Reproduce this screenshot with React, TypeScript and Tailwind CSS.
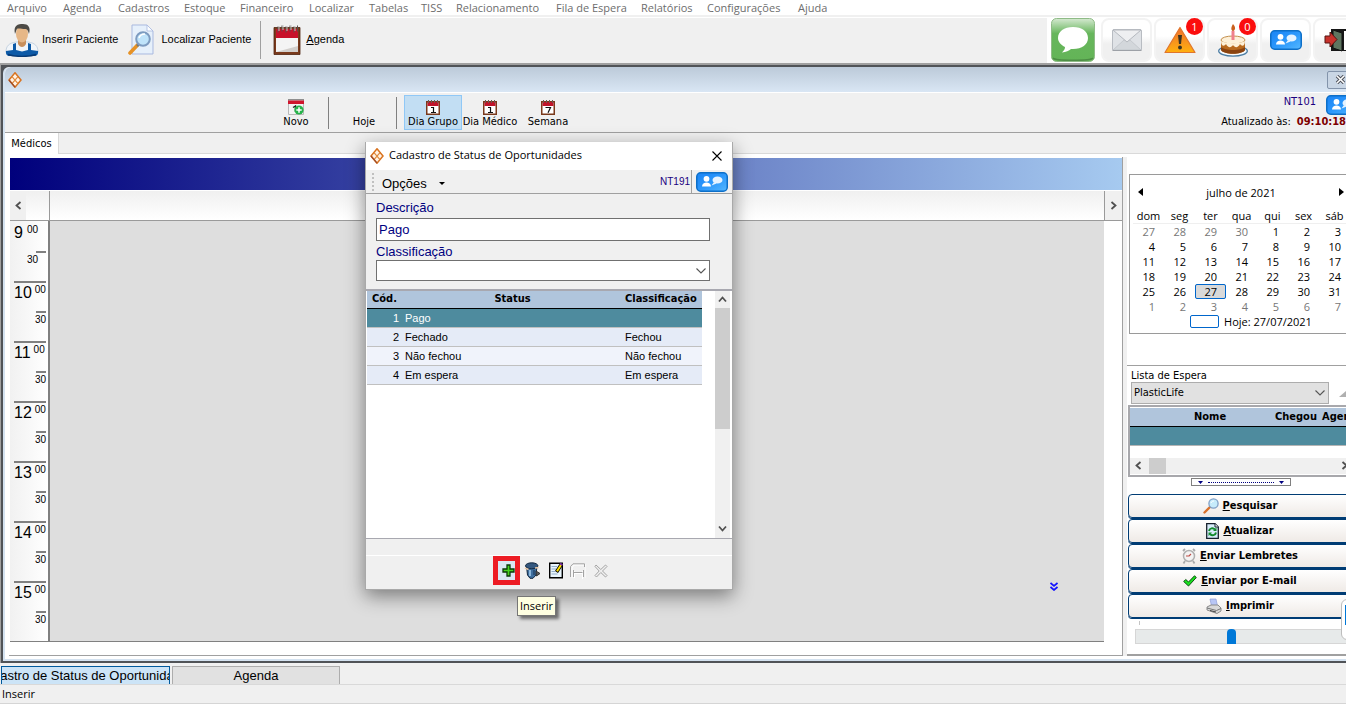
import { ReactNode } from 'react';

const ui = "font-['Open_Sans',sans-serif]";
const tahoma = "font-['DejaVu_Sans_Condensed','DejaVu_Sans',sans-serif]";

const MENU = ['Arquivo', 'Agenda', 'Cadastros', 'Estoque', 'Financeiro', 'Localizar', 'Tabelas', 'TISS', 'Relacionamento', 'Fila de Espera', 'Relatórios', 'Configurações', 'Ajuda'];

const HOURS = [9, 10, 11, 12, 13, 14, 15];

const WEEKDAYS = ['dom', 'seg', 'ter', 'qua', 'qui', 'sex', 'sáb'];

const WEEKS = [
  [27, 28, 29, 30, 1, 2, 3],
  [4, 5, 6, 7, 8, 9, 10],
  [11, 12, 13, 14, 15, 16, 17],
  [18, 19, 20, 21, 22, 23, 24],
  [25, 26, 27, 28, 29, 30, 31],
  [1, 2, 3, 4, 5, 6, 7],
];

const STATUSES = [
  { id: 1, name: 'Pago', kind: '', row: 'bg-[#4e8b9e] text-white' },
  { id: 2, name: 'Fechado', kind: 'Fechou', row: 'bg-[#e5ebf7]' },
  { id: 3, name: 'Não fechou', kind: 'Não fechou', row: 'bg-[#f0f3fb]' },
  { id: 4, name: 'Em espera', kind: 'Em espera', row: 'bg-[#e5ebf7]' },
];

function DiamondIcon() {
  return (
    <svg width="14" height="16" viewBox="0 0 14 16" className="shrink-0">
      <path d="M7 .8 13 8 7 15.2 1 8Z" fill="#fff3e6" stroke="#d9731f" strokeWidth="1.5" />
      <path d="M4 4.6 10 11.6M10 4.6 4 11.6" stroke="#e08a3c" strokeWidth="1.2" />
      <path d="M7 15.2 1 8" stroke="#9c4a28" strokeWidth="1.2" />
    </svg>
  );
}

function PatientIcon() {
  return (
    <svg width="34" height="34" viewBox="0 0 34 34" className="shrink-0">
      <path d="M1 29c0-6 3-9 10-10h12c7 1 10 4 10 10l-4 2H5Z" fill="#f1f5f9" stroke="#b9c9da" strokeWidth=".8" />
      <path d="M1 28c-.5 3 1 5 4 5h24c3 0 4.500-2 4-5l-7-1v-6l-3-1v7l-6 1.500-6-1.500v-7l-3 1v6Z" fill="#0d5aa7" />
      <path d="M3 31.500c8 2.500 20 2.500 28 0" stroke="#083a75" strokeWidth="1.500" fill="none" />
      <path d="M13 17h8v4c-2 4-6 4-8 0Z" fill="#c98f5b" />
      <ellipse cx="17" cy="11" rx="6" ry="8.500" fill="#e6b787" />
      <path d="M10 11C8 2 13 1 18 1s8 3 6 10c-1-4-2-5-4-5-3 0-7-1-8 0s-1 3-2 5Z" fill="#4c4a45" />
    </svg>
  );
}

function SearchDocIcon() {
  return (
    <svg width="26" height="32" viewBox="0 0 26 32" className="shrink-0">
      <path d="M4 1h15l6 6v23H4Z" fill="#e6f0fb" stroke="#a9b9df" />
      <path d="M19 1v6h6Z" fill="#fafdff" stroke="#a9b9df" strokeWidth=".8" />
      <path d="m9.500 21-7.500 8" stroke="#e69226" strokeWidth="3.600" strokeLinecap="round" />
      <path d="m11 20-2 2" stroke="#777" strokeWidth="2.500" />
      <circle cx="15" cy="15" r="6.800" fill="#bfe3fa" stroke="#7d9bc0" strokeWidth="2" />
      <path d="M11 14c1-3 3-4 6-4" stroke="#fff" strokeWidth="1.500" fill="none" />
    </svg>
  );
}

function AgendaIcon() {
  return (
    <svg width="28" height="30" viewBox="0 0 28 30" className="shrink-0">
      <path d="M1 2.500h26v27H1Z" fill="#7a3a1c" stroke="#4f230f" strokeWidth=".8" />
      <path d="M3 4h22v9H3Z" fill="#c8102a" />
      <path d="M3 13h22v14H3Z" fill="#f4f4f4" />
      <path d="m3 27 22-6v6Z" fill="#d2cfcc" />
      <path d="M5 1.500v6M9 .5v6M13 1.500v6M17 .5v6M21 1.500v6M24.500.5v6" stroke="#59504c" />
      <path d="M6 1v5M10 0v5M14 1v5M18 0v5M22 1v5" stroke="#c4c4c4" />
    </svg>
  );
}

function SmallCalendar({ digit }: { digit: string }) {
  return (
    <svg width="14" height="15" viewBox="0 0 14 15" className="shrink-0">
      <path d="M.75 1.750h12.500v12.500H.75Z" fill="#fff" stroke="#7a3a1c" strokeWidth="1.500" />
      <path d="M1.500 2h11v4h-11Z" fill="#c0142a" />
      <path d="M2.500 0v3M5.500 0v3M8.500 0v3M11.500 0v3" stroke="#6b5a55" />
      {digit === '1' ? (
        <path d="M5 7.500h2.500V12.500M5 12.500h5" stroke="#111" strokeWidth="1.200" fill="none" />
      ) : (
        <path d="M4.500 7.500H9.500L7 12.800" stroke="#111" strokeWidth="1.200" fill="none" />
      )}
    </svg>
  );
}

function NewCalendar() {
  return (
    <svg width="16" height="16" viewBox="0 0 16 16" className="shrink-0">
      <path d="M.5 .5h15v15H.5Z" fill="#f4f4f4" stroke="#b8b8b8" />
      <path d="M0 0h16v1.500H0Z" fill="#8f8f8f" />
      <path d="M0 1.500h16V5H0Z" fill="#d0142c" />
      <path d="M5 8.500 7.500 7v6" stroke="#222" strokeWidth="1.400" fill="none" />
      <circle cx="11" cy="11" r="4.600" fill="#27b34b" />
      <path d="M11 8.300v5.400M8.300 11h5.400" stroke="#fff" strokeWidth="1.500" />
    </svg>
  );
}

function SupportIcon() {
  return (
    <svg width="32" height="20" viewBox="0 0 32 20" className="shrink-0">
      <defs>
        <linearGradient id="support" x1="0" y1="0" x2="1" y2="1">
          <stop offset="0" stopColor="#1a84f5" />
          <stop offset=".5" stopColor="#2b97fb" />
          <stop offset="1" stopColor="#55b8ff" />
        </linearGradient>
      </defs>
      <rect x=".75" y=".75" width="30.500" height="18.500" rx="4" fill="url(#support)" stroke="#0d6fc8" strokeWidth="1.500" />
      <circle cx="10.500" cy="6.800" r="2.900" fill="#fff" />
      <path d="M6 14.500c0-5.500 9-5.500 9 0Z" fill="#fff" />
      <ellipse cx="21.500" cy="8" rx="5" ry="3.600" fill="#e6f3ff" />
      <path d="m18 10-2.500 3.500 5-2Z" fill="#e6f3ff" />
    </svg>
  );
}

function GreenChat() {
  return (
    <svg width="44" height="44" viewBox="0 0 44 44" className="shrink-0">
      <defs>
        <linearGradient id="chat" x1="0" y1="0" x2="0" y2="1">
          <stop offset="0" stopColor="#d5e9d1" />
          <stop offset=".35" stopColor="#67b65c" />
          <stop offset="1" stopColor="#63b457" />
        </linearGradient>
      </defs>
      <rect x=".5" y=".5" width="43" height="43" rx="5" fill="url(#chat)" stroke="#8fbb87" />
      <path d="M2 40c2 3 38 3 40 0" stroke="#4d8d45" strokeWidth="1.500" fill="none" />
      <path d="M22 9c9 0 15 4.500 15 11s-6 11-15 11h-2c-2 2-5 3-9 3.500 2-2 3-3.500 3-5.500-4-2-7-5-7-9 0-6.500 6-11 15-11Z" fill="#fff" />
    </svg>
  );
}

function MailIcon() {
  return (
    <svg width="30" height="22" viewBox="0 0 30 22">
      <rect x=".5" y=".5" width="29" height="21" rx="1.500" fill="#dfe2e6" stroke="#b8bcc2" />
      <path d="m1 21 11-10h6l11 10Z" fill="#d3d7db" stroke="#bcc0c5" strokeWidth=".7" />
      <path d="m1 1 14 12L29 1Z" fill="#eeeff1" stroke="#b4b8be" />
      <path d="M.5 21.500h29" stroke="#9da1a7" />
    </svg>
  );
}

function WarningIcon() {
  return (
    <svg width="32" height="28" viewBox="0 0 32 28">
      <defs>
        <linearGradient id="warn" x1="0" y1="0" x2="0" y2="1">
          <stop offset="0" stopColor="#f0702e" />
          <stop offset="1" stopColor="#ffb00f" />
        </linearGradient>
      </defs>
      <path d="M16 1.500 31 26.500H1Z" fill="url(#warn)" stroke="#e0752b" strokeWidth="1.200" strokeLinejoin="round" />
      <path d="M14 9h4l-1 9h-2Z" fill="#3a3322" />
      <circle cx="16" cy="21.500" r="1.900" fill="#3a3322" />
    </svg>
  );
}

function CakeIcon() {
  return (
    <svg width="30" height="33" viewBox="0 0 30 33">
      <ellipse cx="15" cy="27" rx="14.300" ry="5.200" fill="#f6fafd" stroke="#4a7ca3" strokeWidth="1.300" />
      <path d="M3 17v9c3 5 21 5 24 0v-9Z" fill="#b8691e" />
      <path d="M3 23v3c3 5 21 5 24 0v-3c-4 4-20 4-24 0Z" fill="#8a4310" />
      <ellipse cx="15" cy="16" rx="12" ry="4" fill="#fdf0d8" stroke="#c48f4c" strokeWidth="1" />
      <path d="M3 17c0 5 3 6 5 3 2 4 5 4 7 1 2 3 5 3 7-1 2 3 5 2 5-3-5 3-18 3-24 0Z" fill="#fdf0d8" />
      <path d="M13.500 7h3v9h-3Z" fill="#f0818c" />
      <path d="M15 0c3 3 2.500 6.500 0 7-2.500-.5-2-4 0-7Z" fill="#c9601e" />
    </svg>
  );
}

function ExitIcon() {
  return (
    <svg width="30" height="24" viewBox="0 0 30 24">
      <path d="M7 1h22v22H7Z" fill="#171717" />
      <path d="m9 2 9 3v18l-9-3Z" fill="#5f7560" stroke="#111" />
      <path d="M20 3h7v19h-7Z" fill="#fff" />
      <path d="M1 8h5V4l7 7.500L6 19v-4H1Z" fill="#c8322c" stroke="#571511" />
    </svg>
  );
}

function ToolCell({ children, badge, label }: { children: ReactNode; badge?: string; label: string }) {
  return (
    <button aria-label={label} className="relative flex h-11 w-[51px] shrink-0 items-center justify-center rounded-lg border-2 border-[#f3f3f3] bg-linear-to-b from-white from-40% to-[#f0f0f0] to-60%">
      {children}
      {badge && (
        <span className={`${ui} absolute -top-0.5 right-0 flex size-[17px] items-center justify-center rounded-full bg-[#fb0d0d] text-[11px] leading-none text-white`}>
          {badge}
        </span>
      )}
    </button>
  );
}

function Chevron({ dir }: { dir: 'left' | 'right' | 'up' | 'down' }) {
  const paths = { left: 'M6.500 1 2.500 4.500 6.500 8', right: 'M2.500 1 6.500 4.500 2.500 8', up: 'M1 6.500 4.500 2.500 8 6.500', down: 'M1 2.500 4.500 6.500 8 2.500' };
  return (
    <svg width="9" height="9" viewBox="0 0 9 9" className="shrink-0">
      <path d={paths[dir]} fill="none" stroke="#505050" strokeWidth="1.800" />
    </svg>
  );
}

function SelectArrow() {
  return (
    <svg width="10" height="6" viewBox="0 0 10 6" className="pointer-events-none col-start-1 row-start-1 mr-1 self-center justify-self-end">
      <path d="m.5.5 4.500 4.500L9.500.5" fill="none" stroke="#555" strokeWidth="1.100" />
    </svg>
  );
}

function AgendaTool({ icon, label, active, width }: { icon?: ReactNode; label: string; active?: boolean; width: string }) {
  return (
    <button className={`${width} ${active ? 'border-[#90c8f6] bg-[#c2def3]' : 'border-transparent'} flex h-[35px] shrink-0 flex-col items-center justify-end border text-[11px] leading-[14px] whitespace-nowrap`}>
      {icon}
      <span>{label}</span>
    </button>
  );
}

function TimeColumn() {
  return (
    <div className="w-10 shrink-0 border-r-2 border-[#808080] bg-linear-to-r from-[#f1f1f1] to-white pr-0.5 pl-1">
      {HOURS.map((hour, i) => (
        <div key={hour}>
          <div className={`${i ? 'border-[#808080]' : 'border-transparent'} flex h-[30px] items-start gap-[3px] border-t-2`}>
            <span className="text-[16px] leading-[19px]">{hour}</span>
            <span className={`${i ? '' : 'pl-px'} text-[10px] leading-[13px]`}>00</span>
          </div>
          <div className="flex h-[30px] flex-col items-end">
            <span className="h-0.5 w-2.5 bg-[#808080]" />
            <span className={`${i ? '' : 'pr-2'} text-[10px] leading-[13px]`}>30</span>
          </div>
        </div>
      ))}
    </div>
  );
}

function MiniCalendar() {
  return (
    <section className={`${ui} mx-0.5 mt-[17px] h-[160px] w-[224px] border border-[#9a9a9a] px-[3px] text-[11px] leading-[15px]`}>
      <div className="flex h-[34px] items-center justify-between px-[5px]">
        <button aria-label="Mês anterior">
          <svg width="5" height="8" viewBox="0 0 5 8"><path d="M5 0v8L0 4Z" /></svg>
        </button>
        <span>julho de 2021</span>
        <button aria-label="Próximo mês">
          <svg width="5" height="8" viewBox="0 0 5 8"><path d="M0 0v8l5-4Z" /></svg>
        </button>
      </div>
      <table className="w-[217px] table-fixed border-collapse">
        <thead>
          <tr className="h-[14px] border-b border-[#efefef]">
            {WEEKDAYS.map((d) => (
              <th key={d} className="p-0 text-center font-normal leading-[13px]">{d}</th>
            ))}
          </tr>
        </thead>
        <tbody>
          {WEEKS.map((week, w) => (
            <tr key={w} className="h-[15px]">
              {week.map((day, d) => {
                const outside = (w === 0 && day > 20) || w === 5;
                const today = w === 4 && day === 27;
                return (
                  <td key={d} className={`p-0 pr-[9px] text-right ${outside ? 'text-[#767676]' : ''} ${today ? 'rounded-xs bg-[#d9d9d9] outline -outline-offset-1 outline-[#0066cc]' : ''}`}>
                    {day}
                  </td>
                );
              })}
            </tr>
          ))}
        </tbody>
      </table>
      <div className="flex h-4 items-center justify-center gap-[5px] pl-5">
        <span className="h-[13px] w-[29px] rounded-xs border border-[#0066cc]" />
        <span>Hoje: 27/07/2021</span>
      </div>
    </section>
  );
}

const ACTIONS: { key: string; rest: string; icon: ReactNode }[] = [
  {
    key: 'P', rest: 'esquisar',
    icon: (
      <svg width="16" height="16" viewBox="0 0 16 16">
        <path d="m7 9-5.500 5.500" stroke="#d9702a" strokeWidth="2.400" strokeLinecap="round" />
        <circle cx="10.500" cy="5.500" r="4.600" fill="#c6ebfb" stroke="#7f9fc6" strokeWidth="1.300" />
        <path d="M8 5c.5-1.500 1.500-2 3-2" stroke="#fff" fill="none" />
      </svg>
    ),
  },
  {
    key: 'A', rest: 'tualizar',
    icon: (
      <svg width="13" height="16" viewBox="0 0 13 16">
        <path d="M.7.7H9l3.300 3.300v11.300H.7Z" fill="#d8ecfa" stroke="#17202c" strokeWidth="1.300" />
        <path d="M9 .7V4h3.300" fill="#fff" stroke="#17202c" />
        <path d="M3 8c.5-3 4-3.500 6-1.500M10 9.500c-.5 3-4 3.500-6 1.500" stroke="#138a2d" strokeWidth="2" fill="none" />
        <path d="M10.500 4.500V8H7ZM2.500 13V9.500H6Z" fill="#138a2d" />
      </svg>
    ),
  },
  {
    key: 'E', rest: 'nviar Lembretes',
    icon: (
      <svg width="14" height="16" viewBox="0 0 14 16">
        <path d="m1 3 2-2M13 3l-2-2M3 13l-1.500 2.500M11 13l1.500 2.500" stroke="#aaa" strokeWidth="1.800" />
        <circle cx="7" cy="8" r="5.500" fill="#f3f3f3" stroke="#b0b0b0" strokeWidth="1.500" />
        <path d="M7 8H4M7 8l2-2" stroke="#c05048" strokeWidth="1.100" />
      </svg>
    ),
  },
  {
    key: 'E', rest: 'nviar por E-mail',
    icon: (
      <svg width="14" height="12" viewBox="0 0 14 12">
        <path d="m.7 6.500 2-2L5.500 7 11.500.8l1.800 1.700-7.800 8.500Z" fill="#19e01e" stroke="#0a4d10" strokeWidth="1" />
      </svg>
    ),
  },
  {
    key: 'I', rest: 'mprimir',
    icon: (
      <svg width="16" height="16" viewBox="0 0 16 16">
        <path d="M4 1h6l1.500 7H5.500Z" fill="#b8c6f5" stroke="#8f9fd8" strokeWidth=".7" />
        <path d="m1 9 4-2h7l3 3v3l-4 2.500L1 12Z" fill="#d9d9d9" stroke="#8b8b8b" />
        <path d="m1 10 9.500 2.500L15 10.500" fill="none" stroke="#777" />
        <path d="m4 12.500 6 1.500" stroke="#444" />
      </svg>
    ),
  },
];

function WaitingList() {
  return (
    <section className="mt-[31px] border-t border-[#a0a0a0] text-[11px]">
      <div className="flex flex-col pt-[3px] pl-1">
        <label htmlFor="lista" className="leading-[13px]">Lista de Espera</label>
        <div className="flex items-center gap-2.5">
          <div className="grid w-[198px]">
            <select id="lista" className="col-start-1 row-start-1 h-[22px] appearance-none border border-[#adadad] bg-[#e1e1e1] px-0.5 text-[11px]">
              <option>PlasticLife</option>
            </select>
            <SelectArrow />
          </div>
          <svg width="16" height="7" viewBox="0 0 16 7"><path d="M8 0l8 7H0Z" fill="#b0b0b0" /></svg>
        </div>
      </div>
      <div className="mt-px ml-px h-[72px] overflow-hidden border-2 border-r-0 border-[#a8a8ac] pt-px">
        <table className="w-[253px] table-fixed border-collapse">
          <colgroup>
            <col className="w-[145px]" />
            <col className="w-[47px]" />
            <col />
          </colgroup>
          <thead>
            <tr className="h-[18px] border-b border-black bg-[#b0c5dc] text-left leading-[17px]">
              <th className="py-0 pr-0 pl-16">Nome</th>
              <th className="p-0">Chegou</th>
              <th className="p-0">Agenda</th>
            </tr>
          </thead>
          <tbody>
            <tr className="h-[19px] border-b border-[#b5b5b5] bg-[#4e8b9e]"><td /><td /><td /></tr>
          </tbody>
        </table>
        <div className="mt-3 flex h-4 w-[219px] items-center gap-1.5 bg-[#f0f0f0] pl-1">
          <Chevron dir="left" />
          <span className="h-4 w-[17px] bg-[#cdcdcd]" />
          <span className="ml-auto"><Chevron dir="right" /></span>
        </div>
      </div>
    </section>
  );
}

function SidePanel() {
  return (
    <aside className="flex w-[231px] shrink-0 flex-col border-b-2 border-[#a0a0a0] pb-2.5">
      <MiniCalendar />
      <WaitingList />
      <div className="mt-px ml-16 flex h-2 w-[100px] items-center gap-[5px] border border-[#808080] bg-white px-1.5">
        <svg width="5" height="3" viewBox="0 0 5 3"><path d="M0 0h5L2.500 3Z" fill="#000080" /></svg>
        <span className="grow border-t border-dotted border-[#000080]" />
        <svg width="5" height="3" viewBox="0 0 5 3"><path d="M0 0h5L2.500 3Z" fill="#000080" /></svg>
      </div>
      <div className="mt-2 ml-px flex flex-col gap-px">
        {ACTIONS.map((a) => (
          <button key={a.rest} className="flex h-6 items-center justify-center gap-1 rounded-sm border border-[#003c74] bg-linear-to-b from-white to-[#efeae6] pr-1.5 text-[11px] leading-4 font-bold shadow-[0_1px_0_#003c74]">
            {a.icon}
            <span><span className="underline">{a.key}</span>{a.rest}</span>
          </button>
        ))}
      </div>
      <div className="mt-[3px] ml-3 h-1 w-px bg-[#c4c4c4]" />
      <label className="mt-1 ml-2 flex h-[15px]">
        <span className="sr-only">Intervalo</span>
        <input
          type="range"
          min="0"
          max="100"
          defaultValue="43"
          className="h-[15px] w-full appearance-none border border-[#d6d6d6] bg-[#e7eaea] [&::-webkit-slider-thumb]:h-[15px] [&::-webkit-slider-thumb]:w-[9px] [&::-webkit-slider-thumb]:appearance-none [&::-webkit-slider-thumb]:rounded-t-sm [&::-webkit-slider-thumb]:bg-[#0078d7]"
        />
      </label>
    </aside>
  );
}

function AgendaWindow() {
  return (
    <main className={`${tahoma} -mr-3 ml-0.5 flex grow flex-col rounded-tl-md border-b-2 border-l-2 border-[#d4e2f0] bg-white text-[11px]`}>
      <header className="flex h-[25px] items-center justify-between rounded-tl-md bg-linear-to-b from-[#bccad9] to-[#d9e6f4] pr-1 pl-[3px]">
        <DiamondIcon />
        <button aria-label="Fechar agenda" className="flex h-[18px] w-[27px] items-center justify-center rounded-xs border border-[#8394ab] bg-[#c9d6e5]">
          <svg width="11" height="9" viewBox="0 0 11 9">
            <path d="m2 1 7 7M9 1 2 8" stroke="#4b4f58" strokeWidth="3.400" />
            <path d="m2 1 7 7M9 1 2 8" stroke="#fff" strokeWidth="1.500" />
          </svg>
        </button>
      </header>
      <div className="flex h-[41px] shrink-0 items-center border-t border-b border-t-white border-b-[#a0a0a0] bg-[#f0f0f0] pl-[270px]">
        <AgendaTool width="w-[42px]" icon={<NewCalendar />} label="Novo" />
        <span className="mr-3 ml-[11px] h-8 w-px bg-[#808080]" />
        <AgendaTool width="w-[46px]" label="Hoje" />
        <span className="mr-[7px] ml-[9px] h-8 w-px bg-[#808080]" />
        <AgendaTool width="w-[58px]" icon={<SmallCalendar digit="1" />} label="Dia Grupo" active />
        <AgendaTool width="w-[56px]" icon={<SmallCalendar digit="1" />} label="Dia Médico" />
        <AgendaTool width="w-[60px]" icon={<SmallCalendar digit="7" />} label="Semana" />
        <div className="mr-3 ml-auto flex flex-col items-end whitespace-nowrap">
          <div className="-mr-3 flex h-5 items-center gap-2.5">
            <a href="#nt101" className="pb-1 text-[#1a007f]">NT101</a>
            <SupportIcon />
          </div>
          <p className="flex gap-1.5 pb-0.5 leading-[14px]">
            Atualizado às: <strong className="text-[#7d0000]">09:10:18</strong>
          </p>
        </div>
      </div>
      <div className="flex h-[21px] shrink-0 bg-[#f0f0f0]">
        <button className="w-[54px] border-r border-[#d9d9d9] bg-white pt-0.5">Médicos</button>
        <span className="grow border-b border-[#d9d9d9]" />
      </div>
      <div className="flex grow pt-[3px] pb-[3px] pl-1">
        <div className="flex grow flex-col border-r border-b border-[#a0a0a0] pt-px pl-px">
          <div className="h-8 bg-linear-to-r/srgb from-[#00007c] to-[#a6caf0]" />
          <div className="mt-px flex h-[30px] border-b border-[#9a9a9a] bg-linear-to-b from-[#f0f0f0] to-white">
            <button aria-label="Dia anterior" className="flex w-4 items-center justify-center bg-[#f0f0f0]"><Chevron dir="left" /></button>
            <span className="w-6 border-r border-[#9a9a9a]" />
            <span className="grow border-r border-[#9a9a9a]" />
            <button aria-label="Próximo dia" className="flex w-[17px] items-center justify-center bg-[#f0f0f0]"><Chevron dir="right" /></button>
          </div>
          <div className="mr-[18px] flex border-b border-[#808080] font-['Liberation_Sans',sans-serif]">
            <TimeColumn />
            <div className="flex grow items-end justify-end bg-[#dedede] pr-[46px] pb-[50px]">
              <svg width="8" height="9" viewBox="0 0 8 9">
                <path d="m.5 1 3.500 3 3.500-3M.5 5 4 8l3.500-3" fill="none" stroke="#1414ff" strokeWidth="1.700" />
              </svg>
            </div>
          </div>
        </div>
        <div className="w-1 bg-[#f0f0f0]" />
        <SidePanel />
      </div>
    </main>
  );
}

function StatusDialog() {
  return (
    <div role="dialog" aria-label="Cadastro de Status de Oportunidades" className="absolute top-[142px] left-[365px] flex w-[368px] flex-col border border-t-0 border-[#a9a9a9] bg-[#f0f0f0] font-['Liberation_Sans',sans-serif] shadow-[0_6px_18px_rgba(0,0,0,0.45)]">
      <header className={`${ui} flex h-7 items-center gap-[5px] bg-white pr-2.5 pl-1 text-[11px]`}>
        <DiamondIcon />
        <h1 className="pb-0.5">Cadastro de Status de Oportunidades</h1>
        <button aria-label="Fechar" className="ml-auto">
          <svg width="10" height="10" viewBox="0 0 10 10"><path d="m.5.5 9 9m0-9-9 9" stroke="#000" strokeWidth="1.100" /></svg>
        </button>
      </header>
      <div className="flex h-6 items-center border-b border-[#a0a0a0] pl-1.5">
        <span className="h-[18px] border-l-2 border-dotted border-[#c0c0c0]" />
        <button className="ml-2 flex items-center gap-3 pt-1 text-[13px]">
          Opções
          <svg width="6" height="3" viewBox="0 0 6 3"><path d="M0 0h6L3 3Z" /></svg>
        </button>
        <a href="#nt191" className="ml-auto pr-px text-[10px] text-[#1a007f]">NT191</a>
        <button aria-label="Suporte" className="flex h-full items-center border-l border-[#a0a0a0] px-1"><SupportIcon /></button>
      </div>
      <form className="flex h-[95px] flex-col pt-1.5 pr-[22px] pl-2.5 text-[13px] text-[#00007f]">
        <label htmlFor="descricao" className="leading-4">Descrição</label>
        <input id="descricao" defaultValue="Pago" className="mt-0.5 h-[23px] border border-[#707070] bg-white px-0.5" />
        <label htmlFor="classificacao" className="mt-[3px] leading-4">Classificação</label>
        <div className="grid">
          <select id="classificacao" className="col-start-1 row-start-1 h-[21px] appearance-none border border-[#707070] bg-white px-0.5">
            <option></option>
          </select>
          <SelectArrow />
        </div>
      </form>
      <div className="flex h-[250px] items-start border-t-2 border-b border-[#a8a8b0] bg-white pl-px">
        <table className="w-[335px] table-fixed border-collapse text-[11px] leading-[14px]">
          <colgroup>
            <col className="w-9" />
            <col />
            <col className="w-20" />
          </colgroup>
          <thead>
            <tr className={`${tahoma} h-[17px] border-b border-black bg-[#b0c5dc]`}>
              <th className="p-0 pl-[5px] text-left">Cód.</th>
              <th className="p-0">Status</th>
              <th className="p-0 pl-[3px] text-left">Classificação</th>
            </tr>
          </thead>
          <tbody>
            {STATUSES.map((s) => (
              <tr key={s.id} className={`${s.row} h-[19px] border-b border-[#c0c0c0]`}>
                <td className="p-0 pr-1 text-right">{s.id}</td>
                <td className="p-0 pl-0.5">{s.name}</td>
                <td className="p-0 pl-[3px]">{s.kind}</td>
              </tr>
            ))}
          </tbody>
        </table>
        <div className="mr-0.5 ml-auto flex h-full w-[15px] flex-col items-center bg-[#f0f0f0] pb-1">
          <span className="flex h-[17px] items-center"><Chevron dir="up" /></span>
          <span className="h-[121px] w-full bg-[#cdcdcd]" />
          <span className="mt-auto flex h-3 items-center"><Chevron dir="down" /></span>
        </div>
      </div>
      <div className="mt-4 flex h-[34px] items-center border-t border-white pb-1 pl-[127px]">
        <button aria-label="Inserir" className="flex h-[29px] w-[27px] items-center justify-end border-[5px] border-[#ed1c24] bg-[#d9e7f4]">
          <svg width="13" height="13" viewBox="0 0 13 13">
            <path d="M5 1h3v4h4v3H8v4H5V8H1V5h4Z" fill="#45d321" stroke="#0a3a0a" strokeWidth="1.300" />
          </svg>
        </button>
        <button aria-label="Excluir" className="ml-1">
          <svg width="17" height="17" viewBox="0 0 17 17">
            <path d="M2.500 4h10.500l-1 9-3 3.300H6L3.500 13Z" fill="#3f6f9f" stroke="#10263f" />
            <ellipse cx="7.700" cy="3.800" rx="6.200" ry="3" fill="#34577e" stroke="#10263f" />
            <path d="M6 8v6" stroke="#8db7db" strokeWidth="2" />
            <path d="M10 8v5" stroke="#25466c" strokeWidth="1.500" />
            <path d="m1 6 3.500 1.500M11 6l3.500-.5" stroke="#e7c7a8" strokeWidth="1.600" />
            <path d="m12 9 4 2.500-3.500 2.500Z" fill="#5d5d5d" stroke="#333" />
          </svg>
        </button>
        <button aria-label="Editar" className="ml-2">
          <svg width="14" height="17" viewBox="0 0 14 17">
            <path d="M.7 1.200h12.600v14.600H.7Z" fill="#eaf6fd" stroke="#000" strokeWidth="1.400" />
            <path d="M2.500 4.500H8M2.500 7H7M2.500 9.500H6M2.500 12h6" stroke="#91aeca" />
            <path d="m12 3-4.500 7" stroke="#000" strokeWidth="3.600" />
            <path d="m12 3-4 6.300" stroke="#ffe100" strokeWidth="2" />
            <path d="m11 1.500 2.500 1.500" stroke="#772aa2" strokeWidth="1.800" />
          </svg>
        </button>
        <button aria-label="Salvar" disabled className="ml-[7px]">
          <svg width="16" height="16" viewBox="0 0 16 16">
            <path d="M1 14V4l2-3h12v13M3.500 14V7M3.500 9.500h8M11.500 7v8" fill="none" stroke="#fff" transform="translate(1 1)" />
            <path d="M.5 14V3.500L3 .8h11.500V4M3.500 14V7M3.500 9.500h9M13.500 7v7" fill="none" stroke="#a3a3a3" />
          </svg>
        </button>
        <button aria-label="Cancelar" disabled className="ml-2">
          <svg width="14" height="14" viewBox="0 0 14 14">
            <path d="m2 1 4.800 4.500L11.500 1l1.500 1.500L8.500 7l4.500 4.500-1.500 1.500L6.800 8.500 2.500 13 1 11.500 5.200 7 1 2.500Z" fill="#f0f0f0" stroke="#a3a3a3" />
          </svg>
        </button>
      </div>
    </div>
  );
}

export default function App() {
  return (
    <div className="relative flex min-h-screen flex-col overflow-hidden bg-[#f0f0f0] font-['Liberation_Sans',sans-serif] text-black">
      <nav className={`${ui} grid h-[15px] grid-cols-[56px_55px_66px_56px_69px_60px_52px_35px_100px_85px_66px_91px_1fr] bg-white pl-[7px] text-[11px] leading-[15px] whitespace-nowrap text-[#6d6d6d]`}>
        {MENU.map((m) => (
          <a key={m} href={`#${m}`}>{m}</a>
        ))}
      </nav>
      <div className="flex h-12 items-stretch justify-between border-t-2 border-[#f0f0f0] text-[11px]">
        <div className="flex grow items-center border-t border-white pb-0.5 pl-[5px]">
          <button className="flex items-center gap-[3px]"><PatientIcon />Inserir Paciente</button>
          <button className="ml-2.5 flex items-center gap-[7px]"><SearchDocIcon />Localizar Paciente</button>
          <span className="mr-3 ml-[9px] h-[38px] w-px bg-[#a0a0a0]" />
          <button className="flex items-center gap-[5px]"><AgendaIcon /><span><span className="underline">A</span>genda</span></button>
        </div>
        <div className="-mr-[18px] flex items-center gap-0.5 bg-white pl-1">
          <button aria-label="Mensagens" className="mr-1"><GreenChat /></button>
          <ToolCell label="E-mail"><MailIcon /></ToolCell>
          <ToolCell label="Alertas" badge="1"><WarningIcon /></ToolCell>
          <ToolCell label="Aniversários" badge="0"><CakeIcon /></ToolCell>
          <ToolCell label="Suporte"><SupportIcon /></ToolCell>
          <ToolCell label="Sair"><ExitIcon /></ToolCell>
        </div>
      </div>
      <div className="flex flex-col border-t-2 border-l border-[#a0a0a0] bg-[#505357] pt-0.5 pb-0.5">
        <AgendaWindow />
      </div>
      <div className="flex items-end gap-0.5 border-b border-[#d9d9d9] pt-[3px] pl-px text-[13px] leading-4 whitespace-nowrap">
        <button className="flex h-[18px] w-[169px] justify-center overflow-hidden border border-b-0 border-[#00599c] bg-[#cce4f7] pt-px">Cadastro de Status de Oportunidades</button>
        <button className="h-[18px] w-[168px] overflow-hidden border border-b-0 border-[#adadad] bg-[#e1e1e1] pt-px">Agenda</button>
      </div>
      <footer className={`${ui} grow border-b-2 border-[#d5d5d5] pl-0.5 text-[11px] leading-[18px]`}>Inserir</footer>

      <StatusDialog />
      <div role="tooltip" className={`${ui} absolute top-[596px] left-[517px] border border-[#767676] bg-[#ffffe1] px-0.5 text-[11px] leading-[18px] shadow-[3px_3px_3px_rgba(0,0,0,0.5)]`}>
        Inserir
      </div>
      <div className="absolute top-[599px] -right-3 h-[41px] w-[17px] rounded-md border border-[#bdbdbd] bg-white py-[5px]">
        <div className="ml-[3px] h-5 bg-[#0078d7]" />
      </div>
    </div>
  );
}
